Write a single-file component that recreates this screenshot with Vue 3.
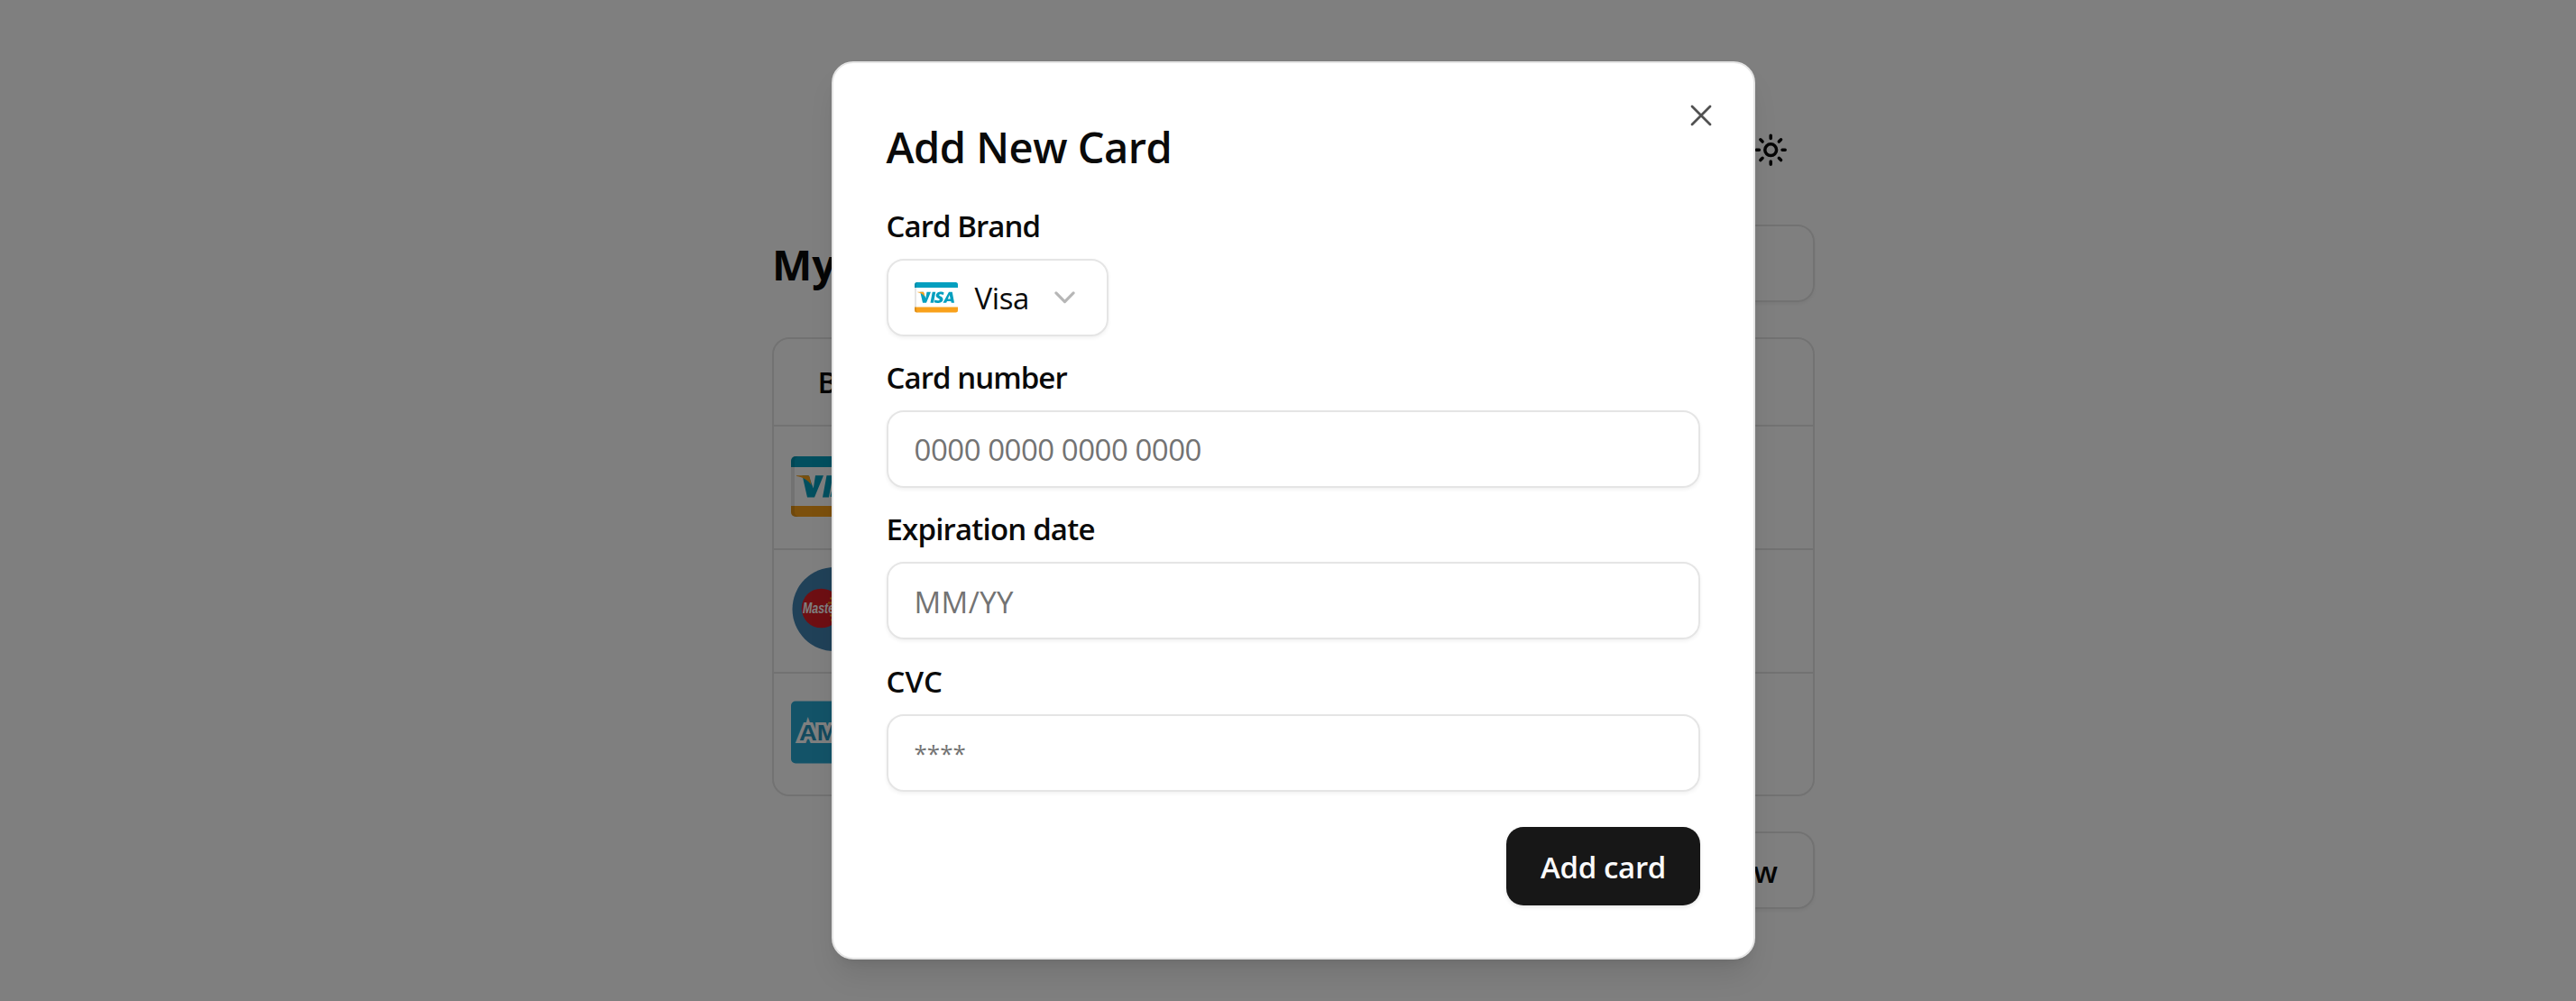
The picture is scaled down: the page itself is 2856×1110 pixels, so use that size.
<script setup>
const rows = ['visa', 'maestro', 'amex']
const fields = [
  { label: 'Card number', hint: '0000 0000 0000 0000', cls: 'digits' },
  { label: 'Expiration date', hint: 'MM/YY', cls: 'date' },
  { label: 'CVC', hint: '****', cls: 'stars' },
]
</script>

<template>
  <div class="page">
    <main class="wallet">
      <div class="toolbar">
        <svg class="sun" viewBox="0 0 24 24" fill="none" stroke="#0a0a0a" stroke-width="2.200" stroke-linecap="round">
          <circle cx="12" cy="12" r="4" />
          <path d="M12 2v2M12 20v2M4.9 4.9l1.4 1.4M17.7 17.7l1.4 1.4M2 12h2M20 12h2M6.3 17.7l-1.4 1.4M19.1 4.9l-1.4 1.4" />
        </svg>
      </div>
      <div class="heading">
        <h1>My Cards</h1>
        <div class="btn search"></div>
      </div>
      <div class="table">
        <div class="thead"><span>Brand</span></div>
        <div v-for="r in rows" :key="r" class="row">
          <svg v-if="r === 'visa'" class="logo" viewBox="0 0 96 96">
            <use href="#visa-card" />
          </svg>
          <svg v-else-if="r === 'maestro'" class="logo" viewBox="0 0 96 96">
            <circle cx="48" cy="46.500" r="46.500" fill="#4182b0" />
            <circle cx="63" cy="45.500" r="21.800" fill="#f79f1a" />
            <circle cx="33.500" cy="45.500" r="21.800" fill="#dc1f27" />
            <path d="M43 34.500h6M41 39.500h6M43 53.500h5M44 58.500h5" stroke="#f79f1a" stroke-width="1.800" />
            <text x="13" y="51" class="maestro" textLength="68" lengthAdjust="spacingAndGlyphs">MasterCard</text>
          </svg>
          <svg v-else class="logo" viewBox="0 0 96 96">
            <rect y="11.500" width="96" height="69" rx="5" fill="#26a6d1" />
            <text x="9" y="54.500" class="amex" textLength="79" lengthAdjust="spacingAndGlyphs">AMEX</text>
          </svg>
        </div>
      </div>
      <div class="foot"><div class="btn add">Add new</div></div>
    </main>

    <div class="overlay">
      <section class="modal">
        <svg class="close" viewBox="0 0 24 24" fill="none" stroke="#515151" stroke-width="2.800" stroke-linecap="round">
          <path d="M2 2l20 20M22 2L2 22" />
        </svg>
        <h2>Add New Card</h2>
        <div class="label"><span class="brand-label">Card Brand</span></div>
        <div class="box select">
          <svg class="mini" viewBox="0 14 96 67">
            <g id="visa-card">
              <rect y="14" width="96" height="67" rx="5" fill="#fff" />
              <path d="M0 26V19a5 5 0 0 1 5-5H91a5 5 0 0 1 5 5V26Z" fill="#049fbf" />
              <path d="M0 69V76a5 5 0 0 0 5 5H91a5 5 0 0 0 5-5V69Z" fill="#f9a11b" />
              <path d="M0 19a5 5 0 0 1 5-5H9a5 5 0 0 0-5 5V76a5 5 0 0 0 5 5H5a5 5 0 0 1-5-5Z" fill="#000" opacity=".1" />
              <path d="M27 35.300 24.800 49.500 19.500 35.300H12.500L18 59.500H26L36 35.300ZM39.500 35.300H46.500L42 59.500H35ZM65 36.500 64 42C59 40 54.500 40 54.500 42.500 54.500 45 63 45.500 63 51.500 63 58 57 60 51 60 48 60 45.500 59.500 43.500 58.500L44.700 53C49 55 55.500 55.500 55.500 52.500 55.500 49.500 47.500 49.500 47.500 43.500 47.500 38 53 35 58.500 35 61 35 63.500 35.500 65 36.500ZM76 35.300H83.500L88 59.500H81.500L80.700 56H72L70.300 59.500H63ZM77.500 42 73.800 50.800H79.500Z" fill="#049fbf" fill-rule="evenodd" />
              <path d="M6 35.300H18C20 35.300 20.700 36 21 38L22.500 46C20 41 13 37 6 36Z" fill="#f9a11b" />
            </g>
          </svg>
          <span class="value">Visa</span>
          <svg class="chevron" viewBox="0 0 24 14" fill="none" stroke="#b6b6b6" stroke-width="3.200" stroke-linecap="round" stroke-linejoin="round">
            <path d="M2 2l10 10L22 2" />
          </svg>
        </div>
        <template v-for="f in fields" :key="f.label">
          <div class="label"><span :class="f.cls + '-label'">{{ f.label }}</span></div>
          <div class="box"><span :class="['hint', f.cls]">{{ f.hint }}</span></div>
        </template>
        <div class="actions"><div class="submit"><span>Add card</span></div></div>
      </section>
    </div>
  </div>
</template>

<style>
body { margin: 0; }
</style>

<style scoped>
* { box-sizing: border-box; }
.page { position: relative; height: 1110px; overflow: hidden; background: #fff; color: #0a0a0a; font-family: "Open Sans", "Noto Sans", sans-serif; font-size: 33px; }
.wallet { width: 1156px; margin-left: 856px; }
.toolbar { height: 249px; padding: 147px 29.500px 0 0; display: flex; justify-content: flex-end; }
.sun { width: 38.400px; height: 38.400px; }
.heading { height: 86px; display: flex; justify-content: space-between; align-items: center; }
h1 { margin: 1px 0 0; font-size: 47px; font-weight: 700; line-height: 64px; }
.btn { border: 2px solid #e5e5e5; border-radius: 19px; box-shadow: 0 2px 4px rgba(0, 0, 0, .06); height: 86px; }
.search { width: 300px; }
.table { margin-top: 39px; height: 509px; border: 2px solid #e5e5e5; border-radius: 19px; }
.thead { height: 94.500px; padding: 0 0 0 48.500px; display: flex; align-items: center; font-weight: 600; }
.row { height: 137.100px; border-top: 2px solid #e5e5e5; display: flex; align-items: center; padding-left: 19px; }
.logo { width: 96px; height: 96px; }
.maestro { font: italic 700 15.700px "Liberation Sans", sans-serif; fill: #fff; }
.amex { font: 700 23px "Liberation Sans", sans-serif; fill: #2694bc; stroke: #fff; stroke-width: 6px; paint-order: stroke; }
.foot { margin-top: 38.500px; display: flex; justify-content: flex-end; }
.add { padding: 3px 39px 0; display: flex; align-items: center; font-weight: 600; }
.overlay { position: absolute; inset: 0; background: rgba(0, 0, 0, .5); padding: 68px 0 0 922px; }
.modal { position: relative; width: 1023.500px; height: 995.500px; padding: 0 58.500px; background: #fff; border: 2px solid #e5e5e5; border-radius: 24px; box-shadow: 0 21px 32px -6px rgba(0, 0, 0, .1), 0 8px 13px -8px rgba(0, 0, 0, .1); }
.close { position: absolute; right: 46px; top: 46px; width: 24px; height: 24px; }
h2 { margin: 0; height: 145px; padding-top: 60.500px; font-size: 47px; line-height: 64px; font-weight: 600; letter-spacing: -.5px; white-space: nowrap; }
.label { height: 82.200px; padding-top: 24.200px; line-height: 44px; font-weight: 600; white-space: nowrap; }
h2 + .label { height: 72px; padding-top: 13.500px; }
.brand-label { letter-spacing: -.95px; }
.digits-label { letter-spacing: -.95px; }
.date-label { letter-spacing: -.82px; }
.box { height: 86px; border: 2px solid #e5e5e5; border-radius: 19px; box-shadow: 0 2px 4px rgba(0, 0, 0, .06); display: flex; align-items: center; padding: 0 29px; white-space: nowrap; }
.select { width: 246px; }
.mini { width: 48px; height: 33.500px; }
.value { margin: 1px 0 0 19px; width: 60px; letter-spacing: -.4px; }
.chevron { margin-left: 28px; width: 23px; height: 13.500px; }
.hint { color: #737373; }
.digits { letter-spacing: -.48px; }
.date { letter-spacing: .4px; padding-top: 2px; }
.stars { font-size: 26px; }
.actions { display: flex; justify-content: flex-end; margin-top: 39px; }
.submit { width: 215px; height: 87px; border-radius: 19px; background: #171717; color: #fafafa; display: flex; align-items: center; justify-content: center; font-weight: 600; letter-spacing: -.35px; padding-top: 3px; box-shadow: 0 2px 4px rgba(0, 0, 0, .1); white-space: nowrap; }
</style>
